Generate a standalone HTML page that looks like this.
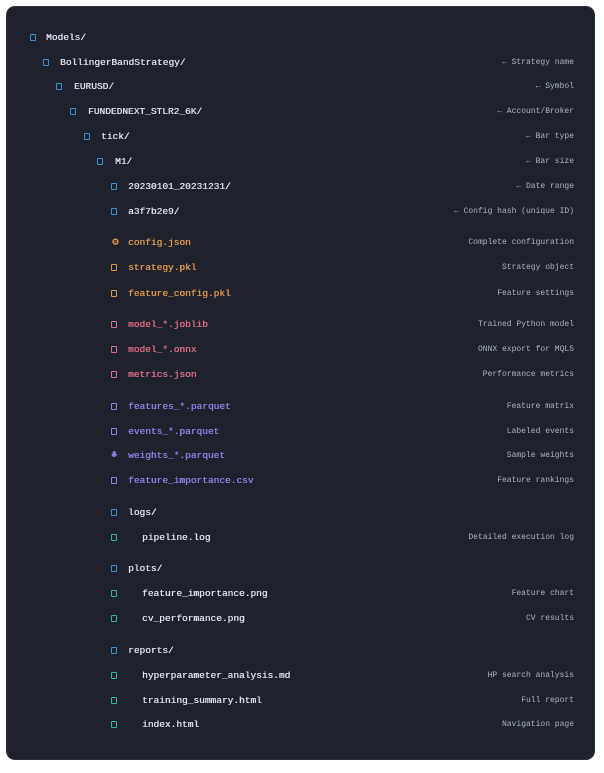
<!DOCTYPE html><html><head><style>
body{margin:0;background:#fff;width:604px;height:773px;position:relative;overflow:hidden}
.p{position:absolute;left:7px;top:7px;width:587px;height:752px;background:#1d222c;border-radius:8px;box-shadow:0 0 0 1px #2b313c}
.r{position:absolute;font-family:"Liberation Mono","Courier New",monospace;font-size:9.5px;line-height:12px;white-space:pre;font-weight:normal;text-shadow:0.4px 0 0 currentColor}
.i{position:absolute;width:4px;height:5px;border:1.5px solid currentColor;border-radius:1px;background:#1a2430}
.c{position:absolute;right:30px;font-family:"Liberation Mono","Courier New",monospace;font-size:8px;line-height:12px;color:#aeb5c1;white-space:pre}
</style></head><body><div class="p"></div>
<div id="t"></div>
<script>
const rows=[
[38,33,46,'Models/','#d9dee7','#3d8fd1','',''],
[63,46,60,'BollingerBandStrategy/','#d9dee7','#3d8fd1','← Strategy name'],
[87,59,74,'EURUSD/','#d9dee7','#3d8fd1','← Symbol'],
[112,73,88,'FUNDEDNEXT_STLR2_6K/','#d9dee7','#3d8fd1','← Account/Broker'],
[137,87,101,'tick/','#d9dee7','#3d8fd1','← Bar type'],
[162,100,115,'M1/','#d9dee7','#3d8fd1','← Bar size'],
[187,114,128,'20230101_20231231/','#d9dee7','#3d8fd1','← Date range'],
[212,114,128,'a3f7b2e9/','#d9dee7','#3d8fd1','← Config hash (unique ID)'],
[243,114,128,'config.json','#e0954a','#e0954a','Complete configuration','g'],
[268,114,128,'strategy.pkl','#e0954a','#e0954a','Strategy object'],
[294,114,128,'feature_config.pkl','#e0954a','#e0954a','Feature settings'],
[325,114,128,'model_*.joblib','#e06a88','#e06a88','Trained Python model'],
[350,114,128,'model_*.onnx','#e06a88','#e06a88','ONNX export for MQL5'],
[375,114,128,'metrics.json','#e06a88','#e06a88','Performance metrics'],
[407,114,128,'features_*.parquet','#8c7fe6','#8c7fe6','Feature matrix'],
[432,114,128,'events_*.parquet','#8c7fe6','#8c7fe6','Labeled events'],
[456,114,128,'weights_*.parquet','#8c7fe6','#8c7fe6','Sample weights','w'],
[481,114,128,'feature_importance.csv','#8c7fe6','#8c7fe6','Feature rankings'],
[513,114,128,'logs/','#d9dee7','#3d8fd1',''],
[538,114,142,'pipeline.log','#d9dee7','#33b59a','Detailed execution log'],
[569,114,128,'plots/','#d9dee7','#3d8fd1',''],
[594,114,142,'feature_importance.png','#d9dee7','#33b59a','Feature chart'],
[619,114,142,'cv_performance.png','#d9dee7','#33b59a','CV results'],
[651,114,128,'reports/','#d9dee7','#3d8fd1',''],
[676,114,142,'hyperparameter_analysis.md','#d9dee7','#33b59a','HP search analysis'],
[701,114,142,'training_summary.html','#d9dee7','#33b59a','Full report'],
[725,114,142,'index.html','#d9dee7','#33b59a','Navigation page']];
let h='';
for(const r of rows){
 const [y,ix,tx,txt,tc,ic,cm,sp]=r;
 if(sp==='g')h+=`<div class="r" style="top:${y-6}px;left:${ix-2}px;color:${ic};font-size:11px">⚙</div>`;
 else if(sp==='w')h+=`<div class="r" style="top:${y-6}px;left:${ix-3}px;color:${ic};font-size:10px">♣</div>`;
 else h+=`<div class="i" style="top:${y-4}px;left:${ix-3}px;color:${ic}"></div>`;
 h+=`<div class="r" style="top:${y-6}px;left:${tx}px;color:${tc}">${txt}</div>`;
 if(cm)h+=`<div class="c" style="top:${y-6}px">${cm}</div>`;
}
document.getElementById('t').innerHTML=h;
</script></body></html>
